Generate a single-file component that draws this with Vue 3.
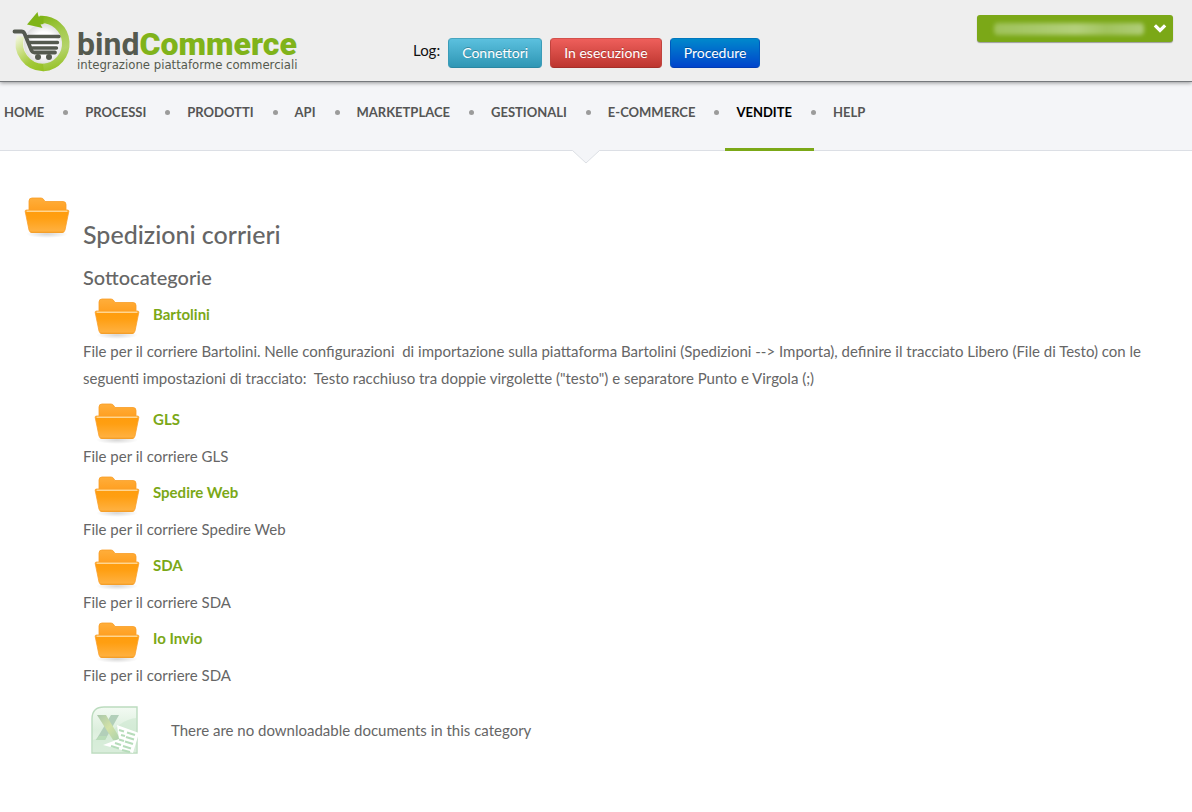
<script setup>
const navItems = ['HOME', 'PROCESSI', 'PRODOTTI', 'API', 'MARKETPLACE', 'GESTIONALI', 'E-COMMERCE', 'VENDITE', 'HELP']
const current = 'VENDITE'
const categories = [
  {
    name: 'Bartolini',
    long: true,
    text: 'File per il corriere Bartolini. Nelle configurazioni\u00a0 di importazione sulla piattaforma Bartolini (Spedizioni --> Importa), definire il tracciato Libero (File di Testo) con le seguenti impostazioni di tracciato:\u00a0 Testo racchiuso tra doppie virgolette ("testo") e separatore Punto e Virgola (;)'
  },
  { name: 'GLS', text: 'File per il corriere GLS' },
  { name: 'Spedire Web', text: 'File per il corriere Spedire Web' },
  { name: 'SDA', text: 'File per il corriere SDA' },
  { name: 'Io Invio', text: 'File per il corriere SDA' }
]
</script>

<template>
  <div class="page">
    <svg class="defs" width="0" height="0" aria-hidden="true">
      <defs>
        <linearGradient id="folderBack" x1="0" y1="0" x2="0" y2="1">
          <stop offset="0" stop-color="#ffae3b" />
          <stop offset="1" stop-color="#ff9d1c" />
        </linearGradient>
        <linearGradient id="folderFront" x1="0" y1="0" x2="0" y2="1">
          <stop offset="0" stop-color="#ff9c0c" />
          <stop offset="0.35" stop-color="#ff9f12" />
          <stop offset="1" stop-color="#ffb244" />
        </linearGradient>
        <radialGradient id="folderShade">
          <stop offset="0" stop-color="#000" stop-opacity="0.16" />
          <stop offset="1" stop-color="#000" stop-opacity="0" />
        </radialGradient>
        <symbol id="folder" viewBox="0 0 46 42">
          <ellipse cx="23" cy="37" rx="21" ry="4" fill="url(#folderShade)" />
          <path d="M5 16V4q0-3 3-3h9q2 0 3 2l1 1.500h18q3 0 3 3V16z" fill="url(#folderBack)" stroke="#f99d24" stroke-width="0.800" />
          <path d="M2.500 13H43.500q1.500 0 1.300 1.500L41 33q-.5 2.500-3 2.500H8q-2.500 0-3-2.500L1.200 14.500q-.2-1.500 1.300-1.500z" fill="url(#folderFront)" stroke="#f9a02c" stroke-width="0.800" />
          <path d="M3 14.300h40" stroke="#ffd590" stroke-width="1.400" stroke-linecap="round" />
          <path d="M7 35.200h32" stroke="#f09518" stroke-width="0.800" stroke-linecap="round" />
        </symbol>
      </defs>
    </svg>

    <header class="header">
      <a class="logo" href="#">
        <svg class="logo-mark" width="62" height="62" viewBox="0 0 62 62" aria-hidden="true">
          <defs>
            <linearGradient id="ring" gradientUnits="userSpaceOnUse" x1="34" y1="58" x2="8" y2="22">
              <stop offset="0" stop-color="#93c01f" />
              <stop offset="0.350" stop-color="#a3c93a" />
              <stop offset="0.700" stop-color="#cfe28c" />
              <stop offset="1" stop-color="#f3f6e2" />
            </linearGradient>
            <linearGradient id="ringRight" gradientUnits="userSpaceOnUse" x1="30" y1="6" x2="48" y2="58">
              <stop offset="0" stop-color="#86b81c" />
              <stop offset="0.350" stop-color="#a6cb50" />
              <stop offset="0.650" stop-color="#b4d36a" />
              <stop offset="1" stop-color="#93c01f" />
            </linearGradient>
            <radialGradient id="disc">
              <stop offset="0.600" stop-color="#fff" />
              <stop offset="1" stop-color="#dedede" />
            </radialGradient>
          </defs>
          <circle cx="32" cy="32" r="20" fill="url(#disc)" />
          <path d="M32 55.500A24 24 0 0 1 8.500 24" fill="none" stroke="url(#ring)" stroke-width="7.500" />
          <path d="M28 7.500A24 24 0 1 1 31.500 55.500" fill="none" stroke="url(#ringRight)" stroke-width="7.500" />
          <path d="M15 12.500 25.500 0l1 4.500 5-.5v8l-3 .5 2 3.500z" fill="#7fb418" />
          <path d="M2.500 19.500h7q2 0 3 2l7 17q1 2 3 2H43" fill="none" stroke="#555a4f" stroke-width="3.800" stroke-linecap="round" stroke-linejoin="round" />
          <path d="M16 24.500h31M18 30.500h27.500M20.500 36h24" stroke="#555a4f" stroke-width="3.400" stroke-linecap="round" />
          <circle cx="26" cy="45" r="3" fill="#555a4f" />
          <circle cx="37" cy="45" r="3" fill="#555a4f" />
        </svg>
        <span class="logo-words">
          <span class="brand">bind<b>Commerce</b></span>
          <span class="tagline">integrazione piattaforme commerciali</span>
        </span>
      </a>

      <div class="log">
        <span class="log-label">Log:</span>
        <button type="button" class="btn teal">Connettori</button>
        <button type="button" class="btn red">In esecuzione</button>
        <button type="button" class="btn blue">Procedure</button>
      </div>

      <button type="button" class="account" aria-label="Account">
        <span class="account-name"></span>
        <svg width="14" height="10" viewBox="0 0 14 10" aria-hidden="true">
          <path d="M3 2.500 7 6.500l4-4" fill="none" stroke="#fff" stroke-width="3.200" stroke-linecap="square" />
        </svg>
      </button>
    </header>

    <nav class="nav">
      <ul>
        <li v-for="item in navItems" :key="item" :class="{ active: item === current }">
          <a href="#">{{ item }}</a>
        </li>
      </ul>
      <svg class="notch" width="28" height="14" viewBox="0 0 28 14" aria-hidden="true">
        <path d="M0 0 14 13 28 0z" fill="#f4f5f8" />
        <path d="M0.500 0.500 14 13 27.500 0.500" fill="none" stroke="#dcdfe5" />
      </svg>
    </nav>

    <main class="main">
      <svg class="folder" aria-hidden="true"><use href="#folder" /></svg>
      <div class="content">
        <h1>Spedizioni corrieri</h1>
        <h2>Sottocategorie</h2>
        <section v-for="c in categories" :key="c.name" class="category" :class="{ long: c.long }">
          <div class="category-head">
            <svg class="folder" aria-hidden="true"><use href="#folder" /></svg>
            <a href="#">{{ c.name }}</a>
          </div>
          <p>{{ c.text }}</p>
        </section>

        <div class="empty">
          <svg width="48" height="48" viewBox="0 0 48 48" aria-hidden="true">
            <defs>
              <linearGradient id="sheet" x1="0" y1="0" x2="0" y2="1">
                <stop offset="0" stop-color="#f3faf3" />
                <stop offset="0.500" stop-color="#dcefdd" />
                <stop offset="1" stop-color="#edf7ec" />
              </linearGradient>
              <linearGradient id="stroke" x1="0" y1="0" x2="1" y2="1">
                <stop offset="0" stop-color="#a9c7ab" />
                <stop offset="0.500" stop-color="#d3e2a6" />
                <stop offset="1" stop-color="#a7d0ac" />
              </linearGradient>
            </defs>
            <path d="M1 47V13Q1 1 13 1H46V47z" fill="url(#sheet)" stroke="#bcdcbf" stroke-width="1.400" />
            <path d="M2 34Q20 27 28 19 36 13 45 12V46H2z" fill="#cde8d0" opacity="0.600" />
            <path d="M20 9h8L14 34H5z" fill="#b2cfb9" />
            <path d="M6 9h9l15 25h-8z" fill="url(#stroke)" />
            <path d="M5 34h9l2-4H8z" fill="#b9dcb8" />
            <path d="M26 19 48 27 42 47 12 39 28 33z" fill="#fff" />
            <path d="M28 24l5 1.500M36 26.500l8 2.500M30 29l4 1M35 31l8 2.500M28 33.500l5 1.500M34 35.500l8 2.500M24 37l6 2M32 40l8 2.500M20 40l8 2.500M31 44l8 2" stroke="#b6dcba" stroke-width="2.200" />
          </svg>
          <span>There are no downloadable documents in this category</span>
        </div>
      </div>
    </main>
  </div>
</template>

<style>
body {
  margin: 0;
  background: #fff;
}
</style>

<style scoped>
.page {
  font-family: Lato, "Open Sans", sans-serif;
  font-size: 15px;
  line-height: 27px;
  color: #666;
}
.defs {
  position: absolute;
}
a {
  text-decoration: none;
}
.header {
  position: relative;
  z-index: 1;
  display: grid;
  grid-template-columns: 400px 1fr auto;
  align-items: start;
  height: 82px;
  padding: 0 19px 0 12px;
  box-sizing: border-box;
  background: #eee;
  border-bottom: 1px solid #76797d;
  box-shadow: 0 1px 4px rgba(0, 0, 0, 0.4);
}
.logo {
  display: flex;
  gap: 3px;
  padding-top: 12px;
  color: #555a4f;
}
.logo-mark {
  flex: none;
}
.logo-words {
  display: flex;
  flex-direction: column;
  padding-top: 18px;
  white-space: nowrap;
}
.brand {
  font-family: Roboto, sans-serif;
  font-size: 32px;
  line-height: 28px;
  font-weight: 700;
}
.brand b {
  color: #80b31a;
}
.tagline {
  font-family: "DejaVu Sans Condensed", "DejaVu Sans", sans-serif;
  font-size: 13px;
  line-height: 13px;
}
.log {
  display: flex;
  align-items: center;
  gap: 8px;
  padding-top: 38px;
  padding-left: 1px;
}
.log-label {
  color: #111;
  line-height: 25px;
  align-self: flex-start;
}
.btn {
  height: 30px;
  padding: 0 13px;
  font: 14px/20px Lato, sans-serif;
  color: #fff;
  text-shadow: 0 -1px 0 rgba(0, 0, 0, 0.25);
  border: 1px solid;
  border-radius: 4px;
}
.teal {
  background: linear-gradient(#5bc0de, #2f96b4);
  border-color: #46a5bf #3a9cb8 #2a87a2;
}
.red {
  background: linear-gradient(#ee5f5b, #bd362f);
  border-color: #d3504b #c0433d #a52f29;
}
.blue {
  background: linear-gradient(#0088cc, #0044cc);
  border-color: #0077bd #0058bd #003cb3;
}
.account {
  display: flex;
  align-items: center;
  justify-content: space-between;
  width: 196px;
  height: 27px;
  margin-top: 15px;
  padding: 0 6px 0 17px;
  background: #7ba817;
  border: 0;
  border-radius: 3px;
  box-shadow: 0 1px 1px rgba(0, 0, 0, 0.35);
}
.account-name {
  width: 150px;
  height: 12px;
  border-radius: 4px;
  background: linear-gradient(90deg, #9fc25a, #a9c96c 30%, #b4d07c 55%, #a1c35e 75%, #b0cd78);
  filter: blur(2px);
}
.nav {
  position: relative;
  height: 68px;
  background: #f4f5f8;
  border-bottom: 1px solid #dcdfe5;
}
.nav ul {
  display: flex;
  gap: 8px;
  margin: 0 0 0 -7px;
  padding: 0;
  list-style: none;
}
.nav li {
  position: relative;
  height: 66px;
  border-bottom: 3px solid transparent;
}
.nav li a {
  display: block;
  padding: 17px 22px 0 11px;
  font-size: 13px;
  font-weight: 700;
  color: #555;
}
.nav li:not(:last-child)::after {
  content: "";
  position: absolute;
  top: 28px;
  right: -2px;
  width: 5px;
  height: 5px;
  border-radius: 50%;
  background: #9b9b9b;
}
.nav li.active {
  border-color: #7ba817;
}
.nav li.active a {
  color: #000;
}
.notch {
  position: absolute;
  left: 572px;
  top: 68px;
}
.main {
  display: flex;
  align-items: flex-start;
  gap: 13px;
  padding: 46px 24px 40px;
}
.folder {
  flex: none;
  width: 46px;
  height: 42px;
}
.content {
  flex: 1;
  padding-top: 19px;
}
h1 {
  margin: 0;
  font-size: 25px;
  line-height: 36px;
  font-weight: 500;
}
h2 {
  margin: 10px 0 0;
  font-size: 20px;
  line-height: 30px;
  font-weight: 500;
}
.category-head {
  display: flex;
  gap: 13px;
  height: 40px;
  padding: 6px 0 0 11px;
}
.category-head a {
  color: #7ba817;
  font-weight: 700;
  padding-top: 3px;
}
.category p {
  margin: 0;
}
.category.long {
  margin-bottom: 5px;
}
.empty {
  display: flex;
  align-items: center;
  gap: 32px;
  padding: 17px 0 0 8px;
}
</style>
